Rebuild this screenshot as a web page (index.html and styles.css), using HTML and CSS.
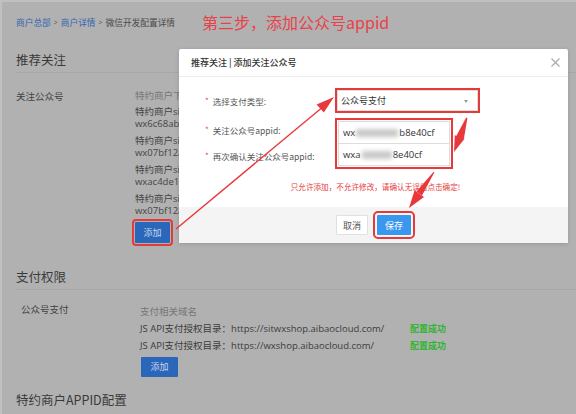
FILE: index.html
```html
<!DOCTYPE html>
<html lang="zh-CN">
<head>
<meta charset="utf-8">
<title>微信开发配置详情</title>
<link rel="stylesheet" href="styles.css">
</head>
<body>
<div class="page">
  <div class="crumbs">
    <span class="crumb-link">商户总部</span><span class="sep">&gt;</span><span class="crumb-link">商户详情</span><span class="sep">&gt;</span><span class="crumb-cur">微信开发配置详情</span>
    <span class="annot">第三步，添加公众号appid</span>
  </div>

  <div class="sec-title">推荐关注</div>
  <div class="row row-follow">
    <div class="label">关注公众号</div>
    <div class="content">
      <div class="list-head">特约商户下公众</div>
      <div class="item"><div>特约商户sit</div><div>wx6c68ab2f</div></div>
      <div class="item"><div>特约商户sit</div><div>wx07bf12a9</div></div>
      <div class="item"><div>特约商户sit</div><div>wxac4de17b</div></div>
      <div class="item"><div>特约商户sit</div><div>wx07bf12a9</div></div>
      <div class="btn btn-dim btn-mark">添加</div>
    </div>
  </div>

  <div class="sec-title sec-pay">支付权限</div>
  <div class="row row-pay">
    <div class="label label-pay">公众号支付</div>
    <div class="content content-pay">
      <div class="line muted">支付相关域名</div>
      <div class="line"><span class="url">JS API支付授权目录：https://sitwxshop.aibaocloud.com/</span><span class="ok">配置成功</span></div>
      <div class="line"><span class="url">JS API支付授权目录：https://wxshop.aibaocloud.com/</span><span class="ok">配置成功</span></div>
      <div class="btn btn-dim btn-pay">添加</div>
    </div>
  </div>

  <div class="sec-title sec-appid">特约商户APPID配置</div>
</div>

<div class="modal">
  <div class="modal-head">
    <span>推荐关注 | 添加关注公众号</span>
    <svg class="close" width="9" height="9" viewBox="0 0 9 9"><path d="M0.5 0.5 L8.5 8.5 M8.5 0.5 L0.5 8.5" stroke="#a8a8a8" stroke-width="1.1" fill="none"/></svg>
  </div>
  <div class="modal-body">
    <div class="form-row">
      <div class="f-label"><span class="star">*</span><span>选择支付类型:</span></div>
      <div class="select mark">公众号支付<span class="caret"></span></div>
    </div>
    <div class="form-pair">
      <div class="f-labels">
        <div class="f-label f-l2"><span class="star">*</span><span>关注公众号appid:</span></div>
        <div class="f-label f-l3"><span class="star">*</span><span>再次确认关注公众号appid:</span></div>
      </div>
      <div class="inputs mark">
        <div class="input">wx<span class="blur b1"></span>b8e40cf</div>
        <div class="input">wxa<span class="blur b2"></span>8e40cf</div>
      </div>
    </div>
    <div class="warn">只允许添加，不允许修改，请确认无误后点击确定!</div>
  </div>
  <div class="modal-foot">
    <div class="mbtn cancel">取消</div>
    <div class="mbtn save">保存</div>
  </div>
</div>

<svg class="arrows" width="576" height="414" viewBox="0 0 576 414">
  <g fill="#e8383c" stroke="#e8383c">
    <line x1="176" y1="229" x2="321" y2="108.5" stroke-width="1.4"/>
    <polygon points="334,97 323.8,112.6 316.6,104.4" stroke="none"/>
    <polygon points="467.4,118 466.2,117.6 455.5,137.5 463.9,138.7" stroke="none"/>
    <polygon points="454,152 464.6,138.8 454.8,135.3" stroke="none"/>
    <polygon points="434.4,172.3 433.6,171.7 416.5,191.5 422,195.4" stroke="none"/>
    <polygon points="409,208 424,197 414.6,190.3" stroke="none"/>
  </g>
</svg>
</body>
</html>
```

FILE: styles.css
```css
* { box-sizing: border-box; }
html, body { margin: 0; padding: 0; }
body {
  width: 576px;
  height: 414px;
  overflow: hidden;
  background: #b1b1b1;
  font-family: "Open Sans", "Noto Sans CJK SC", sans-serif;
  position: relative;
}
.page {
  border-top: 2px solid #c0c0c0;
  border-left: 2px solid #c0c0c0;
  padding-left: 14px;
  height: 414px;
}
.crumbs {
  height: 40px;
  display: flex;
  align-items: center;
  font-size: 8.7px;
  white-space: nowrap;
}
.crumb-link { color: #3366b2; }
.crumb-cur { color: #4a4a4a; }
.sep { color: #555; font-size: 7px; margin: 0 3px; }
.annot {
  margin-left: 27px;
  font-size: 16px;
  color: #e9414a;
  font-family: "Noto Sans CJK SC", "Open Sans", sans-serif;
}
.sec-title {
  margin-top: 8px;
  font-size: 12.5px;
  line-height: 20px;
  color: #3a3a3a;
  padding-bottom: 2px;
  border-bottom: 1px solid #a7a7a7;
  font-family: "Noto Sans CJK SC", sans-serif;
}
.sec-pay { margin-top: 20px; }
.sec-appid { margin-top: 13px; border-bottom: none; }
.row { display: flex; }
.row-follow { padding-top: 17px; }
.label {
  width: 119px;
  flex: none;
  font-size: 9.5px;
  line-height: 12px;
  color: #424242;
  font-family: "Noto Sans CJK SC", sans-serif;
}
.content {
  font-size: 9.5px;
  line-height: 12px;
  color: #454545;
  white-space: nowrap;
}
.list-head { color: #787878; margin-bottom: 4px; line-height: 12px; }
.item { margin-bottom: 5px; }
.btn {
  display: flex;
  align-items: center;
  justify-content: center;
  font-size: 9px;
  font-family: "Noto Sans CJK SC", sans-serif;
}
.btn-dim {
  background: #2a67ba;
  color: #c9d5e8;
  border-radius: 1px;
}
.btn-mark {
  width: 35px;
  height: 21px;
  margin: 1px 0 4px 0;
  outline: 2px solid #e53a3a;
  outline-offset: 1px;
}
.row-pay { padding-top: 13px; }
.label-pay { width: 124px; padding-left: 5px; }
.line { line-height: 17px; display: flex; }
.muted { color: #767676; }
.url { width: 270px; color: #3c3c3c; }
.ok { color: #2fb52f; font-weight: bold; font-family: "Noto Sans CJK SC", sans-serif; font-size: 9px; }
.btn-pay { width: 37px; height: 20px; margin-top: 3px; margin-left: 1px; }

.modal {
  position: absolute;
  left: 179px;
  top: 49px;
  width: 389px;
  height: 194px;
  background: #fff;
  border-radius: 2px;
  box-shadow: 0 1px 4px rgba(0,0,0,0.15);
  display: flex;
  flex-direction: column;
  font-family: "Noto Sans CJK SC", "Open Sans", sans-serif;
}
.modal-head {
  height: 28px;
  border-bottom: 1px solid #ececec;
  display: flex;
  align-items: center;
  justify-content: space-between;
  padding: 0 8px 0 12px;
  font-size: 9px;
  color: #333;
  font-weight: 500;
}
.modal-body {
  flex: 1;
  padding: 13px 0 0 26px;
}
.form-row { display: flex; align-items: center; }
.f-label {
  width: 132px;
  flex: none;
  display: flex;
  align-items: center;
  gap: 4px;
  font-size: 8.5px;
  color: #555;
  white-space: nowrap;
}
.star { color: #e04848; font-size: 8px; line-height: 8px; }
.select {
  position: relative;
  width: 141px;
  height: 21px;
  border: 1px solid #ddd;
  font-size: 9px;
  line-height: 19px;
  padding-left: 3px;
  color: #333;
}
.mark { outline: 2px solid #e53a3a; outline-offset: 0; }
.caret {
  position: absolute;
  right: 9px;
  top: 9px;
  border-left: 2.5px solid transparent;
  border-right: 2.5px solid transparent;
  border-top: 3px solid #999;
}
.form-pair { display: flex; margin-top: 10px; }
.f-labels { width: 132px; flex: none; }
.f-l2 { height: 12px; line-height: 12px; margin-top: 3px; }
.f-l3 { height: 12px; line-height: 12px; margin-top: 14px; }
.inputs { width: 112px; outline-offset: 1px; margin-left: 1px; }
.input {
  height: 23px;
  border: 1px solid #ddd;
  font-size: 9.5px;
  line-height: 21px;
  padding-left: 4px;
  color: #333;
  font-family: "Open Sans", sans-serif;
  white-space: nowrap;
}
.input + .input { margin-top: -1px; }
.blur {
  display: inline-block;
  height: 8px;
  vertical-align: middle;
  background: #c9c9c9;
  filter: blur(2px);
  margin: 0 1px;
}
.b1 { width: 42px; }
.b2 { width: 30px; }
.warn {
  margin: 15px 0 0 -22px;
  text-align: center;
  font-size: 7.6px;
  line-height: 12px;
  color: #e63d3d;
}
.modal-foot {
  height: 36px;
  background: #f4f4f4;
  display: flex;
  align-items: center;
  justify-content: center;
  gap: 9px;
}
.mbtn {
  height: 20px;
  display: flex;
  align-items: center;
  justify-content: center;
  font-size: 9px;
  border-radius: 1px;
}
.cancel {
  width: 32px;
  background: #fff;
  border: 1px solid #e0e0e0;
  color: #555;
}
.save {
  width: 34px;
  background: #3a97ee;
  color: #fff;
  outline: 2px solid #e53a3a;
  outline-offset: 2px;
}
.arrows {
  position: absolute;
  left: 0;
  top: 0;
  pointer-events: none;
}
```
